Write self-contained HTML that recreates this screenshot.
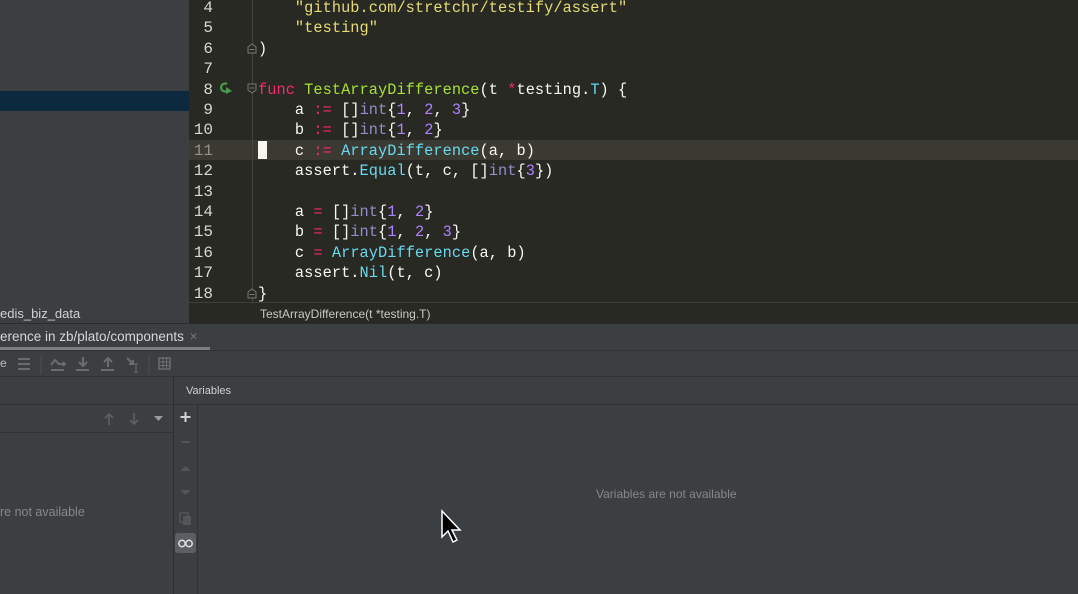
<!DOCTYPE html>
<html><head><style>
*{margin:0;padding:0;box-sizing:border-box}
body{width:1078px;height:594px;overflow:hidden;background:#3b3f42;position:relative;font-family:"Liberation Sans",sans-serif}
.abs{position:absolute}
#left{left:0;top:0;width:189px;height:324px;background:#3c3f41}
#ed{left:189px;top:0;width:889px;height:302px;background:#282923}
.ln{position:absolute;left:189px;width:24px;text-align:right;font:16px/20.4px "Liberation Mono",monospace;color:#d8d8d0}
.cd{position:absolute;left:258px;font:15.3px/20.4px "Liberation Mono",monospace;color:#f8f8f2;white-space:pre;letter-spacing:0.05px}
.s{color:#e6db74}.k{color:#f92672}.f{color:#a6e22e}.t{color:#66d9ef}.n{color:#ae81ff}.i{color:#8e8ec8}
#crumb{left:189px;top:302px;width:889px;height:22px;background:#282923;border-top:1px solid #3e3f3a;font-size:12px;color:#c8c8c0;padding:4px 0 0 71px}
#lines{position:absolute;left:0;top:1px;width:1078px;height:302px}
</style></head><body>
<div id="left" class="abs"></div>
<div class="abs" style="left:0;top:91px;width:189px;height:20px;background:#0d293e"></div>
<div class="abs" style="left:0;top:306px;font-size:13px;color:#d0d0d0">edis_biz_data</div>
<div id="ed" class="abs"></div>
<div class="abs" style="left:189px;top:140px;width:889px;height:20px;background:#3b3a32"></div>
<div class="abs" style="left:252px;top:0;width:1px;height:302px;background:#45463f"></div>
<div class="abs" style="left:258px;top:141px;width:9px;height:18px;background:#f8f8f0"></div>
<svg class="abs" style="left:218px;top:81px" width="16" height="14"><path d="M9 3a4 4 0 1 0 0 7" stroke="#4a9a4a" stroke-width="2.2" fill="none"/><path d="M8 6l6 4-6 3z" fill="#4a9a4a"/></svg>
<svg class="abs" style="left:246px;top:42px" width="12" height="12"><path d="M2 11V5l4-3 4 3v6z M3.5 7.5h5" stroke="#777" fill="#282923"/></svg>
<svg class="abs" style="left:246px;top:83px" width="12" height="12"><path d="M2 1v6l4 3 4-3V1z M3.5 5h5" stroke="#777" fill="#282923"/></svg>
<svg class="abs" style="left:246px;top:287px" width="12" height="12"><path d="M2 11V5l4-3 4 3v6z M3.5 7.5h5" stroke="#777" fill="#282923"/></svg>
<div id="lines">
<div class="ln" style="top:-3px">4</div><div class="ln" style="top:17.4px">5</div><div class="ln" style="top:37.8px">6</div><div class="ln" style="top:58.2px">7</div><div class="ln" style="top:78.6px">8</div><div class="ln" style="top:99px">9</div><div class="ln" style="top:119.4px">10</div><div class="ln" style="top:139.8px;color:#909088">11</div><div class="ln" style="top:160.2px">12</div><div class="ln" style="top:180.6px">13</div><div class="ln" style="top:201px">14</div><div class="ln" style="top:221.4px">15</div><div class="ln" style="top:241.8px">16</div><div class="ln" style="top:262.2px">17</div><div class="ln" style="top:282.6px">18</div>

<div class="cd" style="top:-3px">    <span class="s">"github.com/stretchr/testify/assert"</span></div>
<div class="cd" style="top:17.4px">    <span class="s">"testing"</span></div>
<div class="cd" style="top:37.8px">)</div>
<div class="cd" style="top:78.6px"><span class="k">func</span> <span class="f">TestArrayDifference</span>(t <span class="k">*</span>testing.<span class="t">T</span>) {</div>
<div class="cd" style="top:99px">    a <span class="k">:=</span> []<span class="i">int</span>{<span class="n">1</span>, <span class="n">2</span>, <span class="n">3</span>}</div>
<div class="cd" style="top:119.4px">    b <span class="k">:=</span> []<span class="i">int</span>{<span class="n">1</span>, <span class="n">2</span>}</div>
<div class="cd" style="top:139.8px">    c <span class="k">:=</span> <span class="t">ArrayDifference</span>(a, b)</div>
<div class="cd" style="top:160.2px">    assert.<span class="t">Equal</span>(t, c, []<span class="i">int</span>{<span class="n">3</span>})</div>
<div class="cd" style="top:201px">    a <span class="k">=</span> []<span class="i">int</span>{<span class="n">1</span>, <span class="n">2</span>}</div>
<div class="cd" style="top:221.4px">    b <span class="k">=</span> []<span class="i">int</span>{<span class="n">1</span>, <span class="n">2</span>, <span class="n">3</span>}</div>
<div class="cd" style="top:241.8px">    c <span class="k">=</span> <span class="t">ArrayDifference</span>(a, b)</div>
<div class="cd" style="top:262.2px">    assert.<span class="t">Nil</span>(t, c)</div>
<div class="cd" style="top:282.6px">}</div>
</div>

<div id="crumb" class="abs">TestArrayDifference(t *testing.T)</div>
<div class="abs" style="left:0;top:323px;width:1078px;height:1px;background:#2b2b2b"></div>

<div class="abs" style="left:0;top:329px;font-size:13.5px;color:#d6d6d6">erence in zb/plato/components <span style="color:#777;margin-left:2px">×</span></div>
<div class="abs" style="left:0;top:347px;width:210px;height:3px;background:#7b7f83"></div>
<div class="abs" style="left:0;top:350px;width:1078px;height:1px;background:#323232"></div>
<div class="abs" style="left:0;top:356px;font-size:12px;color:#bbb">e</div>
<svg class="abs" style="left:15px;top:352px" width="160" height="24" fill="#6a6d70" stroke="#6a6d70">
<rect x="3" y="6" width="12" height="2" stroke="none"/><rect x="3" y="11" width="12" height="2" stroke="none"/><rect x="3" y="16" width="12" height="2" stroke="none"/>
<line x1="26" y1="3" x2="26" y2="22" stroke="#4b4e51"/>
<path d="M36 13l4-5 4 4h5M48 10l2 2-2 2" fill="none" stroke-width="2"/><rect x="36" y="17" width="13" height="2" stroke="none"/>
<path d="M68 5v8M64 10l4 4 4-4" fill="none" stroke-width="2"/><rect x="61" y="17" width="13" height="2" stroke="none"/>
<path d="M93 15V7M89 10l4-4 4 4" fill="none" stroke-width="2"/><rect x="86" y="17" width="13" height="2" stroke="none"/>
<path d="M112 6l6 6M118 8v4h-4" fill="none" stroke-width="2"/><path d="M121 12v8M119 12h4M119 20h4" fill="none"/>
<line x1="134" y1="3" x2="134" y2="22" stroke="#4b4e51"/>
<rect x="144" y="6" width="11" height="11" fill="none" stroke-width="1.5"/><path d="M144 10h11M144 13.5h11M148 6v11M151.5 6v11" fill="none"/>
</svg>
<div class="abs" style="left:0;top:376px;width:1078px;height:1px;background:#323232"></div>
<div class="abs" style="left:173px;top:377px;width:1px;height:217px;background:#2e2e2e"></div>
<div class="abs" style="left:186px;top:385px;font-size:11px;color:#cfcfcf">Variables</div>
<div class="abs" style="left:0;top:404px;width:1078px;height:1px;background:#323232"></div>
<div class="abs" style="left:0;top:432px;width:173px;height:1px;background:#323232"></div>
<div class="abs" style="left:197px;top:405px;width:1px;height:189px;background:#323232"></div>
<svg class="abs" style="left:100px;top:410px" width="70" height="18" fill="none" stroke="#5e6164" stroke-width="1.6">
<path d="M9 15V4M5 8l4-4 4 4M34 3v11M30 10l4 4 4-4"/><path d="M54 6h9l-4.5 5z" fill="#9a9da0" stroke="none"/></svg>
<svg class="abs" style="left:174px;top:405px" width="23" height="150">
<path d="M11.5 7v10M6.5 12h10" stroke="#d0d0d0" stroke-width="2"/>
<path d="M7.5 37h8" stroke="#555" stroke-width="2"/>
<path d="M6.5 66l5-5 5 5z" fill="#555"/><path d="M6.5 85l5 5 5-5z" fill="#555"/>
<rect x="6" y="108" width="8" height="9" fill="none" stroke="#555" stroke-width="1.5"/><rect x="9" y="111" width="8" height="9" fill="#555"/>
<rect x="1" y="128" width="21" height="20" rx="3" fill="#5b5f63"/>
<circle cx="8" cy="138.5" r="3.2" fill="none" stroke="#ddd" stroke-width="1.5"/><circle cx="15" cy="138.5" r="3.2" fill="none" stroke="#ddd" stroke-width="1.5"/>
</svg>
<div class="abs" style="left:0;top:505px;font-size:12.5px;color:#85878a">re not available</div>
<div class="abs" style="left:596px;top:487px;font-size:12px;color:#85878a">Variables are not available</div>
<svg class="abs" style="left:440px;top:509px" width="24" height="38"><path d="M2 2v26l6-6 5 11 4-2-5-10h8z" fill="#000" stroke="#fff" stroke-width="1.5"/></svg>
</body></html>
